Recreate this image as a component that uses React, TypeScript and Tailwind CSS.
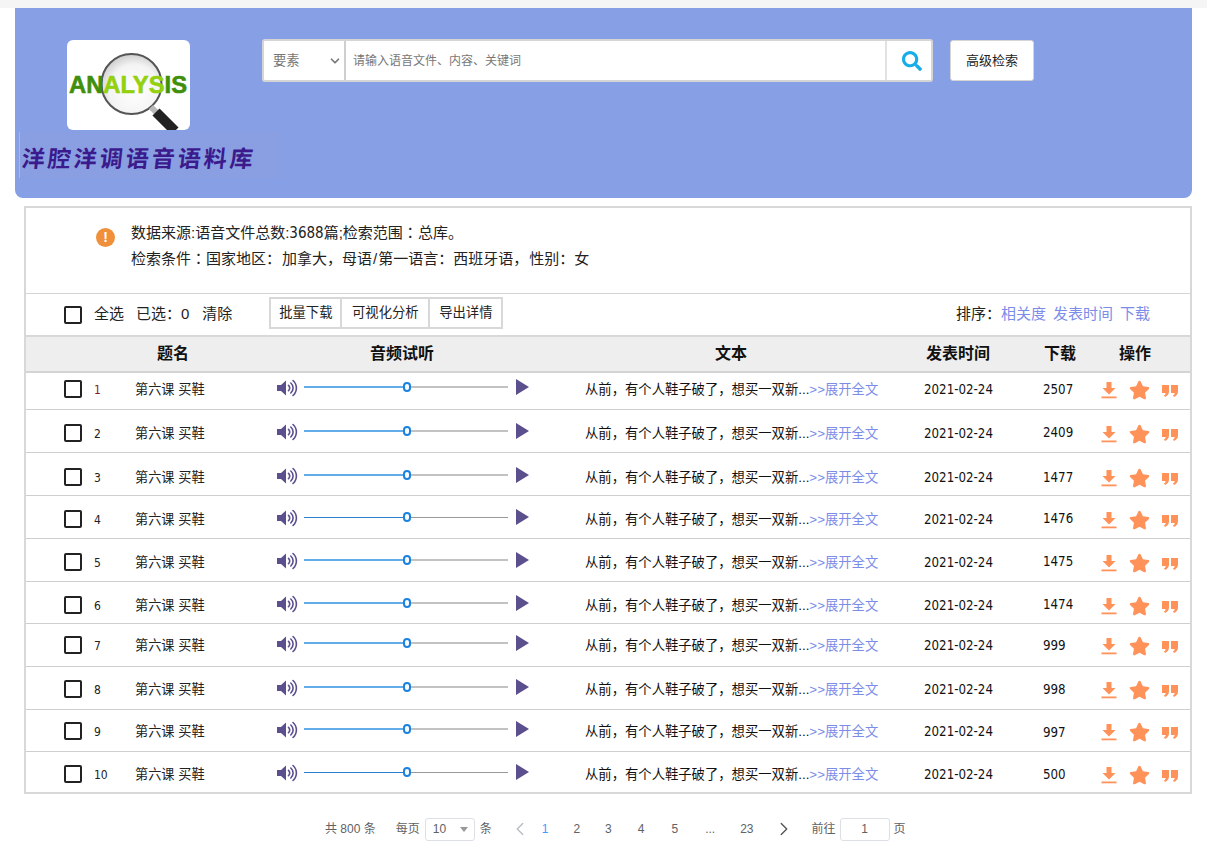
import React from "react";
import { ChevronLeft, ChevronRight, ChevronDown } from "lucide-react";
import { FaStar, FaSearch } from "react-icons/fa";

const rows = [
  { n: 1, h: 37, c: 17, d: 2507, o: 0 },
  { n: 2, h: 43, c: 24, d: 2409, o: -1 },
  { n: 3, h: 43, c: 25, d: 1477, o: 0 },
  { n: 4, h: 43, c: 24, d: 1476, o: -1 },
  { n: 5, h: 43, c: 24, d: 1475, o: -1 },
  { n: 6, h: 42, c: 24, d: 1474, o: -1 },
  { n: 7, h: 43, c: 22, d: 999, o: 0 },
  { n: 8, h: 43, c: 23, d: 998, o: 0 },
  { n: 9, h: 42, c: 22, d: 997, o: 1 },
  { n: 10, h: 40, c: 23, d: 500, o: 0 },
];

const Logo = () => (
  <svg viewBox="0 0 123 90" className="w-full h-full">
    <defs>
      <radialGradient id="glass" cx="55%" cy="60%" r="60%">
        <stop offset="0%" stopColor="#ffffff" />
        <stop offset="70%" stopColor="#f4f4f4" />
        <stop offset="100%" stopColor="#cfcfcf" />
      </radialGradient>
    </defs>
    <circle cx="64.500" cy="44" r="30" fill="url(#glass)" stroke="#555" strokeWidth="2" />
    <text x="2" y="53" fontFamily="'Liberation Sans', sans-serif" fontWeight="700" fontSize="24" textLength="118" lengthAdjust="spacingAndGlyphs" strokeWidth="0.600">
      <tspan fill="#3f8f0d" stroke="#3f8f0d">AN</tspan>
      <tspan fill="#93d10f" stroke="#93d10f">ALYS</tspan>
      <tspan fill="#3f8f0d" stroke="#3f8f0d">IS</tspan>
    </text>
    <path d="M84 67 L90 73" stroke="#b9b9b9" strokeWidth="6" />
    <path d="M89 72 L108 91" stroke="#222" strokeWidth="10" />
  </svg>
);

const Speaker = () => (
  <svg viewBox="0 0 22 18" className="w-[22px] h-[18px] shrink-0" fill="none">
    <path d="M0 6h4l5-4.500v15L4 12H0z" fill="#5b4f8e" />
    <path d="M11.500 6.300a3.600 3.600 0 0 1 0 5.400M13.800 4a6.600 6.600 0 0 1 0 10M16 1.500a10 10 0 0 1 0 15" stroke="#5b4f8e" strokeWidth="1.600" strokeLinecap="round" />
  </svg>
);

const Download = () => (
  <svg viewBox="0 0 16 18" className="w-[16px] h-[18px] shrink-0" fill="#ff9259">
    <path d="M5.500 1h5v6h4L8 13.500 1.500 7h4z" />
    <rect x="0.500" y="15.500" width="15" height="1.800" />
  </svg>
);

const Quote = () => (
  <svg viewBox="0 0 16 12" className="w-[16px] h-[12px] shrink-0 mt-[2px]" fill="#ff9259">
    <path d="M0 0h7v6.500c0 2.500-1.500 4.500-4 5.500L2 10.500c1-.5 1.600-1.500 1.700-2.500H0z" />
    <path d="M9 0h7v6.500c0 2.500-1.500 4.500-4 5.500L11 10.500c1-.5 1.600-1.500 1.700-2.500H9z" />
  </svg>
);

const Slider = ({ dark }: { dark: boolean }) => (
  <div className="relative w-[204px] h-[2px] flex items-center shrink-0">
    <div className={dark ? "w-[103px] h-px bg-[#2b7fd0]" : "w-[103px] h-[2px] bg-[#62ade9]"} />
    <div className={dark ? "flex-1 h-px bg-[#999]" : "flex-1 h-[2px] bg-[#c2c2c2]"} />
    <div className="absolute left-[99px] -top-[4px] w-[8px] h-[10px] rounded-full border-2 border-[#1b82e0] bg-white" />
  </div>
);

const numFont = "font-['DejaVu_Sans_Condensed','Liberation_Sans',sans-serif]";

export default function App() {
  return (
    <div className="w-[1207px] h-[852px] overflow-hidden bg-white text-black font-['Liberation_Sans','Noto_Sans_CJK_SC',sans-serif]">
      <div className="h-2 bg-[#f5f5f5]" />
      <header className="ml-[15px] w-[1177px] h-[190px] rounded-b-[8px] bg-[#879fe4] pt-[32px] pl-[4px]">
        <div className="flex items-start">
          <div className="ml-[48px] w-[123px] h-[90px] rounded-[6px] bg-white overflow-hidden shrink-0">
            <Logo />
          </div>
          <div className="ml-[72px] -mt-px flex h-[43px] w-[671px] border-2 border-[#d5d5d5] bg-white rounded-[3px] shrink-0">
            <div className="w-[82px] flex items-center pl-[9px] pr-[2px] border-r-2 border-[#cfcfcf] text-[13.33px] text-[#777]">
              <span className="flex-1">要素</span>
              <ChevronDown className="w-[14px] h-[14px] text-[#777]" strokeWidth={3} />
            </div>
            <div className="flex-1 flex items-center pl-[7px] text-[12px] text-[#777]">请输入语音文件、内容、关键词</div>
            <div className="w-[46px] flex items-center justify-center pl-[5px] border-l-2 border-[#e2e2e2]">
              <FaSearch className="w-[20px] h-[20px] text-[#16ade9]" />
            </div>
          </div>
          <button className="ml-[17px] w-[84px] h-[41px] bg-white rounded-[3px] border border-[#d5d5d5] text-[13px] text-[#222]">高级检索</button>
        </div>
        <div className="mt-[2px] w-[261px] h-[46px] bg-[#8a9fe2] border-l border-[#a5b7ea] flex items-center pl-[2px] pt-[4px]">
          <span className="text-[23px] font-bold tracking-[3px] whitespace-nowrap text-[#3a1a8c] font-['Noto_Sans_CJK_SC',serif] -skew-x-6">洋腔洋调语音语料库</span>
        </div>
      </header>

      <main className="mt-[8px] ml-[24px] w-[1168px] border-2 border-[#d8d8d8] bg-white">
        <section className="h-[86px] flex items-start border-b border-[#d4d4d4] pl-[70px] pt-[10px]">
          <div className="mt-[10px] w-[19px] h-[19px] rounded-full bg-[#f0903a] text-white flex items-center justify-center text-[14px] font-bold shrink-0">!</div>
          <div className="ml-[16px] text-[15px] leading-[27px] text-[#222]">
            <p className="h-[27px]">数据来源:语音文件总数:<span className={numFont}>3688</span>篇;检索范围<span className="font-['Noto_Sans_CJK_TC',sans-serif]">：</span>总库。</p>
            <p className="h-[27px] -mt-[1px]">
              检索条件<span className="font-['Noto_Sans_CJK_TC',sans-serif]">：</span>国家地区：<span className="ml-[1px]">加拿大，母语</span><span className="px-[1px]">/</span>第一语言：西班牙语，<span className="ml-[1px]">性别：女</span>
            </p>
          </div>
        </section>

        <section className="h-[43px] flex items-center pl-[38px] pr-[40px] text-[15px] text-[#222] border-b-2 border-[#d8d8d8]">
          <span className="w-[18px] h-[18px] border-2 border-[#222] rounded-[2px] shrink-0" />
          <span className="ml-[12px]">全选</span>
          <span className="ml-[12px]">已选：0</span>
          <span className="ml-[13px]">清除</span>
          <div className="ml-[37px] -mt-[3px] h-[32px] flex border-2 border-[#d8d8d8] text-[13.33px] shrink-0">
            <span className="w-[71px] flex items-center justify-center border-r-2 border-[#d8d8d8]">批量下载</span>
            <span className="w-[88px] flex items-center justify-center border-r-2 border-[#d8d8d8]">可视化分析</span>
            <span className="w-[71px] flex items-center justify-center">导出详情</span>
          </div>
          <div className="ml-auto flex gap-[7px]">
            <span>排序：<span className="text-[#7b8de8]">相关度</span></span>
            <span className="text-[#7b8de8]">发表时间</span>
            <span className="text-[#7b8de8]">下载</span>
          </div>
        </section>

        <section className="h-[36px] flex items-center bg-[#eeeeee] border-b-2 border-[#d4d4d4] text-[16px] font-bold text-[#111]">
          <span className="ml-[131px] w-[200px] shrink-0">题名</span>
          <span className="w-[358px] pl-[13px] shrink-0">音频试听</span>
          <span className="w-[211px] shrink-0">文本</span>
          <span className="w-[118px] shrink-0">发表时间</span>
          <span className="w-[75px] shrink-0">下载</span>
          <span>操作</span>
        </section>

        {rows.map((r, i) => (
          <div
            key={r.n}
            className={i === rows.length - 1 ? "flex items-start text-[13.33px] text-[#111]" : "flex items-start text-[13.33px] text-[#111] border-b border-[#cfcfcf]"}
            style={{ height: r.h, paddingTop: r.c - 10 }}
          >
            <div className="ml-[38px] w-[18px] h-[18px] border-2 border-[#222] rounded-[2px] shrink-0" />
            <span className={r.n === 1 ? `ml-[12px] w-[41px] h-[20px] leading-[20px] text-[12px] text-[#8a1c1c] shrink-0 ${numFont}` : `ml-[12px] w-[41px] h-[20px] leading-[20px] text-[12px] text-[#222] shrink-0 ${numFont}`}>{r.n}</span>
            <span className="w-[142px] h-[20px] leading-[20px] text-[13.2px] text-[#222] shrink-0">第六课 买鞋</span>
            <div className="flex items-center h-[18px] -mt-[1px] w-[308px] shrink-0">
              <Speaker />
              <div className="ml-[5px] -mt-[2px]">
                <Slider dark={r.n === 4 || r.n === 10} />
              </div>
              <svg viewBox="0 0 13 16" className="ml-[8px] -mt-[3px] w-[13px] h-[16px] shrink-0" fill="#5b4f8e">
                <path d="M0 0 L13 8 L0 16 Z" />
              </svg>
            </div>
            <span className="w-[339px] h-[20px] leading-[20px] whitespace-nowrap shrink-0">
              从前，有个人鞋子破了，想买一双新...<span className="text-[#7b8de8]">&gt;&gt;展开全文</span>
            </span>
            <span className={`w-[99px] h-[20px] leading-[20px] text-[13.2px] shrink-0 ${numFont}`}>2021-02-24</span>
            <span className={`w-[90px] h-[20px] leading-[20px] text-[13.2px] shrink-0 pl-[20px] ${numFont}`} style={{ marginTop: r.o }}>{r.d}</span>
            <div className="flex items-center gap-[12px] h-[20px] shrink-0 -ml-[12px]">
              <Download />
              <FaStar className="w-[21px] h-[20px] text-[#ff9259]" />
              <Quote />
            </div>
          </div>
        ))}
      </main>

      <footer className="mt-[24px] h-[22px] flex items-center text-[12px] text-[#606266] pl-[325px]">
        <span>共 800 条</span>
        <span className="ml-[20px]">每页</span>
        <div className="ml-[5px] w-[50px] h-[23px] border border-[#dcdfe6] rounded-[3px] flex items-center pl-[7px] pr-[6px]">
          <span className="flex-1">10</span>
          <span className="w-0 h-0 border-x-[4px] border-x-transparent border-t-[5px] border-t-[#999]" />
        </div>
        <span className="ml-[5px]">条</span>
        <ChevronLeft className="ml-[17px] w-[22px] h-[22px] text-[#b8bcc5]" strokeWidth={1.500} />
        <span className="ml-[11px] text-[#409eff]">1</span>
        <span className="ml-[25px]">2</span>
        <span className="ml-[25px]">3</span>
        <span className="ml-[26px]">4</span>
        <span className="ml-[27px]">5</span>
        <span className="ml-[27px]">...</span>
        <span className="ml-[25px]">23</span>
        <ChevronRight className="ml-[19px] w-[22px] h-[22px] text-[#555]" strokeWidth={1.500} />
        <span className="ml-[17px]">前往</span>
        <div className="ml-[4px] w-[50px] h-[23px] border border-[#dcdfe6] rounded-[3px] flex items-center justify-center">1</div>
        <span className="ml-[4px]">页</span>
      </footer>
    </div>
  );
}
